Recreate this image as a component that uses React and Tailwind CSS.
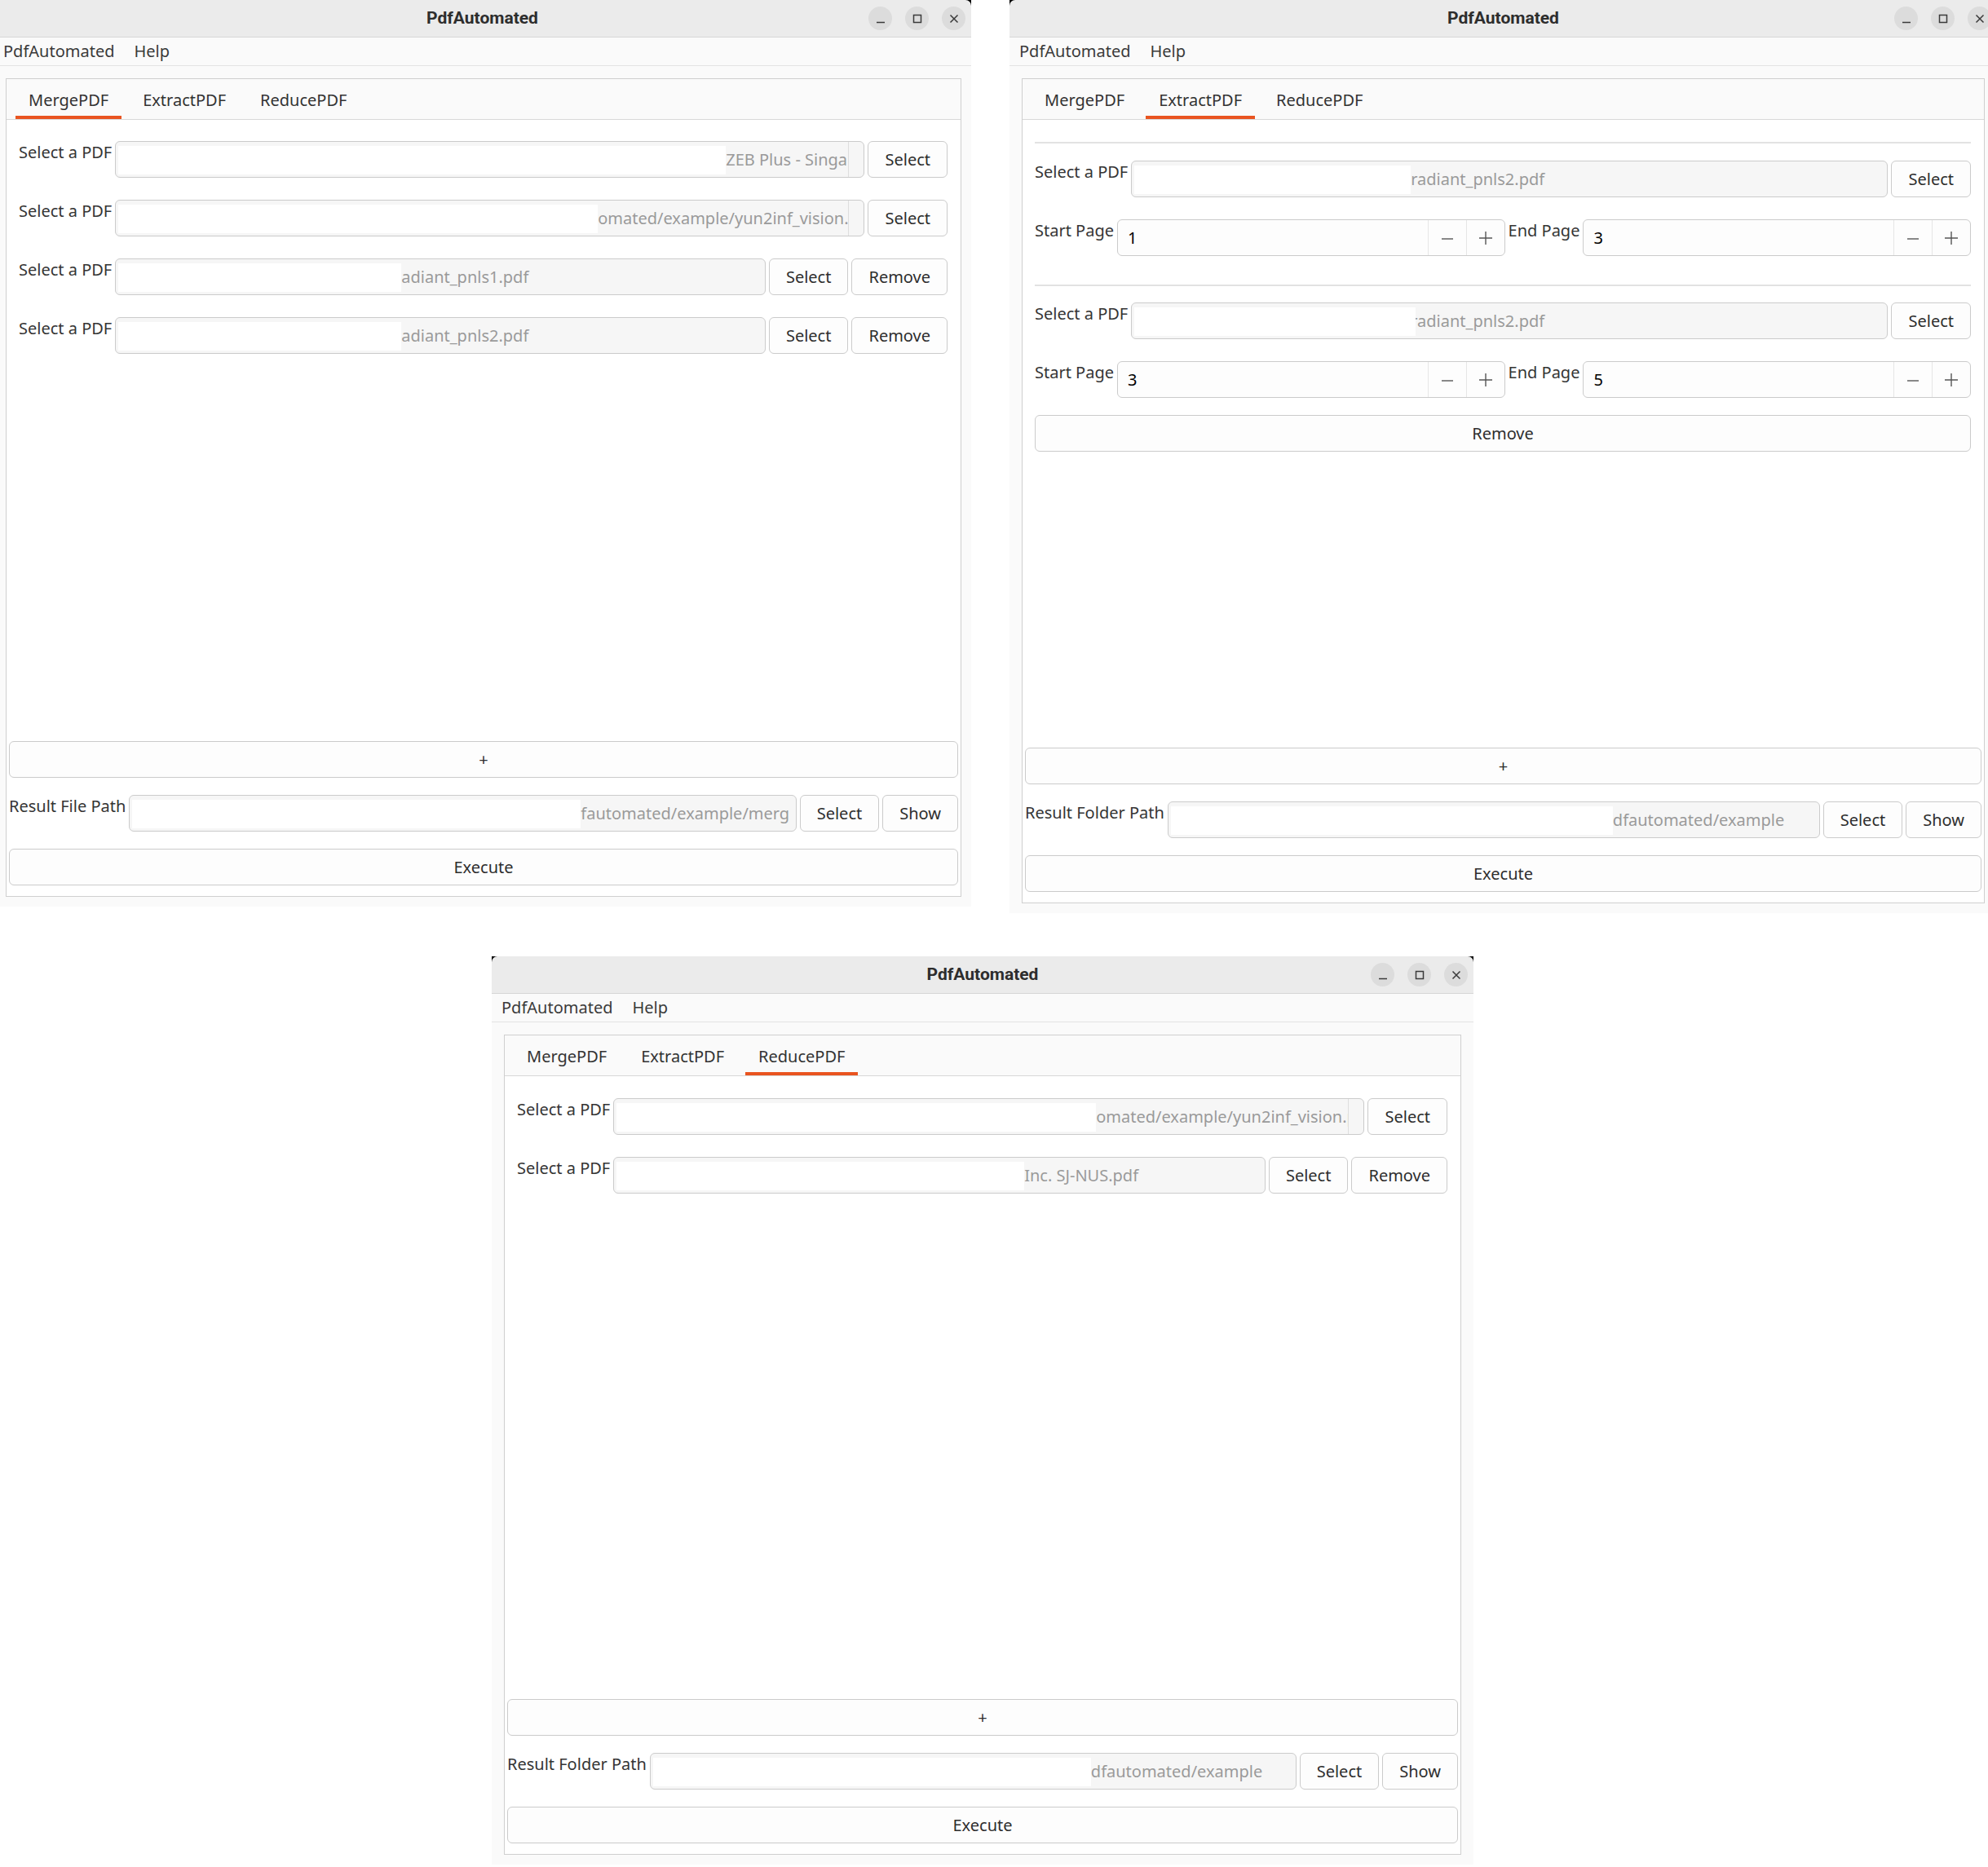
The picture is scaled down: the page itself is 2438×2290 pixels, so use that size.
import React from "react";

const Btn = ({ children, className = "" }) => (
  <button className={`h-[45px] shrink-0 flex items-center justify-center px-[20px] border border-[#cbcbcb] rounded-[6px] bg-[#fdfdfd] text-[#2e2e2e] ${className}`}>
    {children}
  </button>
);

const Label = ({ children }) => (
  <span className="shrink-0 leading-[28px] text-[#353535] whitespace-nowrap">{children}</span>
);

// path field: white block over the start of the path, text starts right after it
const PathInput = ({ text, pad, mask, clip = false, className = "flex-1" }) => (
  <div className={`relative h-[45px] min-w-0 flex border border-[#cbcbcb] rounded-[6px] bg-[#f6f6f6] overflow-hidden ${className}`}>
    <div className={`flex-1 min-w-0 flex items-center overflow-hidden whitespace-nowrap text-[#9a9a9a] ${pad}`}>
      {text}
    </div>
    {clip && <div className="w-[19px] shrink-0 border-l border-[#dedede]" />}
    <div className={`absolute left-[3px] top-[5px] bottom-[3px] bg-white ${mask}`} />
  </div>
);

const Spin = ({ value }) => (
  <div className="flex-1 h-[45px] flex border border-[#cbcbcb] rounded-[6px] bg-[#fdfdfd]">
    <div className="flex-1 flex items-center pl-[12px] text-black">{value}</div>
    <div className="w-[47px] border-l border-[#e6e6e6] flex items-center justify-center">
      <svg width="16" height="16" viewBox="0 0 16 16">
        <path d="M1 9h14" stroke="#555" strokeWidth="1.4" />
      </svg>
    </div>
    <div className="w-[47px] border-l border-[#e6e6e6] flex items-center justify-center">
      <svg width="18" height="18" viewBox="0 0 18 18">
        <path d="M1 9h16M9 1v16" stroke="#555" strokeWidth="1.4" />
      </svg>
    </div>
  </div>
);

const Sep = ({ className = "" }) => <div className={`h-[2px] bg-[#e2e2e2] ${className}`} />;

const TitleBar = () => (
  <div className="relative h-[46px] shrink-0 flex items-center justify-center bg-[#ebebeb] border-b border-[#d6d6d6] rounded-t-[7px]">
    <span className="font-['Roboto',sans-serif] font-bold text-[21px] text-[#2d2d2d]">PdfAutomated</span>
    <div className="absolute right-[7px] top-[8px] flex gap-[16px]">
      <div className="w-[29px] h-[29px] rounded-full bg-[#dcdcdc] flex items-center justify-center">
        <svg width="12" height="12" viewBox="0 0 12 12">
          <path d="M1 10.5h10" stroke="#3a3a3a" strokeWidth="1.5" />
        </svg>
      </div>
      <div className="w-[29px] h-[29px] rounded-full bg-[#dcdcdc] flex items-center justify-center">
        <svg width="12" height="12" viewBox="0 0 12 12">
          <rect x="1.5" y="1.5" width="9" height="9" fill="none" stroke="#3a3a3a" strokeWidth="1.5" />
        </svg>
      </div>
      <div className="w-[29px] h-[29px] rounded-full bg-[#dcdcdc] flex items-center justify-center">
        <svg width="12" height="12" viewBox="0 0 12 12">
          <path d="M1.5 1.5l9 9M10.5 1.5l-9 9" stroke="#3a3a3a" strokeWidth="1.5" />
        </svg>
      </div>
    </div>
  </div>
);

const MenuBar = () => (
  <div className="h-[35px] shrink-0 flex items-center gap-[24px] pl-[12px] bg-[#fafafa] border-b border-[#e3e3e3] text-[#3a3a3a]">
    <span>PdfAutomated</span>
    <span>Help</span>
  </div>
);

const TabBar = ({ active }) => (
  <div className="h-[50px] shrink-0 flex items-stretch gap-[10px] pl-[11px] bg-[#fafafa] border-b border-[#d8d8d8]">
    {["MergePDF", "ExtractPDF", "ReducePDF"].map((t) => (
      <div
        key={t}
        className={`flex items-center px-4 pt-[6px] border-b-[4px] text-[#333] ${t === active ? "border-[#e95420]" : "border-transparent"}`}
      >
        {t}
      </div>
    ))}
  </div>
);

function Window({ className, body = "px-[15px]", active, children, footer }) {
  return (
    <div className={`absolute flex flex-col bg-black ${className}`}>
      <TitleBar />
      <MenuBar />
      <div className={`flex-1 flex flex-col bg-[#fafafa] pt-[15px] pb-[12px] ${body}`}>
        <div className="flex-1 flex flex-col border border-[#cfcfcf] bg-white">
          <TabBar active={active} />
          <div className="flex-1 flex flex-col pl-[15px] pr-[16px]">{children}</div>
          <div className="flex flex-col gap-[21px] px-[3px] pb-[13px]">{footer}</div>
        </div>
      </div>
    </div>
  );
}

const Footer = ({ label, text, pad, mask }) => (
  <>
    <Btn className="w-full">+</Btn>
    <div className="flex items-start gap-1">
      <Label>{label}</Label>
      <PathInput text={text} pad={pad} mask={mask} />
      <Btn>Select</Btn>
      <Btn>Show</Btn>
    </div>
    <Btn className="w-full">Execute</Btn>
  </>
);

export default function App() {
  return (
    <div className="relative w-[2438px] h-[2290px] overflow-hidden bg-white text-[20px] font-['Noto_Sans',sans-serif]">
      {/* MergePDF */}
      <Window
        className="left-[-8px] top-0 w-[1199px] h-[1112px]"
        body="pl-[15px] pr-[12px]"
        active="MergePDF"
        footer={<Footer label="Result File Path" text="fautomated/example/merg" pad="pl-[553px]" mask="w-[550px]" />}
      >
        <div className="pt-[26px] flex flex-col gap-[27px]">
          <div className="flex items-start gap-1">
            <Label>Select a PDF</Label>
            <PathInput text="ZEB Plus - Singapore.pdf" pad="pl-[748px]" mask="w-[745px]" clip />
            <Btn>Select</Btn>
          </div>
          <div className="flex items-start gap-1">
            <Label>Select a PDF</Label>
            <PathInput text="omated/example/yun2inf_vision.pdf" pad="pl-[591px]" mask="w-[588px]" clip />
            <Btn>Select</Btn>
          </div>
          <div className="flex items-start gap-1">
            <Label>Select a PDF</Label>
            <PathInput text="adiant_pnls1.pdf" pad="pl-[350px]" mask="w-[347px]" />
            <Btn>Select</Btn>
            <Btn>Remove</Btn>
          </div>
          <div className="flex items-start gap-1">
            <Label>Select a PDF</Label>
            <PathInput text="adiant_pnls2.pdf" pad="pl-[350px]" mask="w-[347px]" />
            <Btn>Select</Btn>
            <Btn>Remove</Btn>
          </div>
        </div>
      </Window>

      {/* ExtractPDF */}
      <Window
        className="left-[1238px] top-0 w-[1211px] h-[1120px]"
        active="ExtractPDF"
        footer={<Footer label="Result Folder Path" text="dfautomated/example" pad="pl-[545px]" mask="w-[542px]" />}
      >
        <div className="pt-[27px] flex flex-col">
          <Sep />
          <div className="flex items-start gap-1 mt-[21px]">
            <Label>Select a PDF</Label>
            <PathInput text="radiant_pnls2.pdf" pad="pl-[342px]" mask="w-[339px]" />
            <Btn>Select</Btn>
          </div>
          <div className="flex items-start gap-1 mt-[27px]">
            <Label>Start Page</Label>
            <Spin value="1" />
            <Label>End Page</Label>
            <Spin value="3" />
          </div>
          <Sep className="mt-[35px]" />
          <div className="flex items-start gap-1 mt-[20px]">
            <Label>Select a PDF</Label>
            <PathInput text="radiant_pnls2.pdf" pad="pl-[342px]" mask="w-[345px]" />
            <Btn>Select</Btn>
          </div>
          <div className="flex items-start gap-1 mt-[27px]">
            <Label>Start Page</Label>
            <Spin value="3" />
            <Label>End Page</Label>
            <Spin value="5" />
          </div>
          <Btn className="w-full mt-[21px]">Remove</Btn>
        </div>
      </Window>

      {/* ReducePDF */}
      <Window
        className="left-[603px] top-[1173px] w-[1204px] h-[1114px]"
        active="ReducePDF"
        footer={<Footer label="Result Folder Path" text="dfautomated/example" pad="pl-[540px]" mask="w-[537px]" />}
      >
        <div className="pt-[27px] flex flex-col gap-[27px]">
          <div className="flex items-start gap-1">
            <Label>Select a PDF</Label>
            <PathInput text="omated/example/yun2inf_vision.pdf" pad="pl-[591px]" mask="w-[588px]" clip />
            <Btn>Select</Btn>
          </div>
          <div className="flex items-start gap-1">
            <Label>Select a PDF</Label>
            <PathInput text="Inc. SJ-NUS.pdf" pad="pl-[503px]" mask="w-[500px]" />
            <Btn>Select</Btn>
            <Btn>Remove</Btn>
          </div>
        </div>
      </Window>
    </div>
  );
}
